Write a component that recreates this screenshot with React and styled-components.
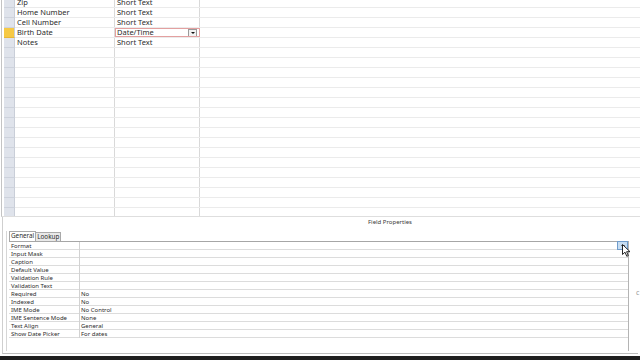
import React from 'react';
import styled, { createGlobalStyle } from 'styled-components';

const GlobalStyle = createGlobalStyle`
  html, body {
    margin: 0;
    padding: 0;
    background: #fff;
  }
  body {
    font-family: "Noto Sans", "Liberation Sans", sans-serif;
    color: #2b2b2b;
  }
`;

const Styled = {
  Screen: styled.div`
    position: relative;
    display: flex;
    flex-direction: column;
    width: 640px;
    height: 360px;
    overflow: hidden;
    background: #fff;
  `,
  TablePane: styled.div`
    height: 217px;
    box-sizing: border-box;
    margin-left: 1px;
    padding-left: 2px;
    border-left: 1px solid #c4c4c4;
    border-bottom: 1px solid #dedede;
    overflow: hidden;
  `,
  Rows: styled.div`
    display: flex;
    flex-direction: column;
    margin-top: -2px;
  `,
  Row: styled.div`
    display: grid;
    grid-template-columns: 11px 100px 85px 1fr;
    height: 10px;
    box-sizing: border-box;
    border-bottom: 1px solid #ebebeb;
  `,
  Selector: styled.div`
    background: ${({ active }) => (active ? '#f6c944' : '#dfe3eb')};
    border-right: 1px solid #c9ced8;
    margin-bottom: -1px;
    border-bottom: 1px solid ${({ active }) => (active ? '#e7b636' : '#cdd2dc')};
  `,
  Cell: styled.div`
    display: flex;
    align-items: center;
    padding-left: 2px;
    font-size: 7.5px;
    line-height: 9px;
    white-space: nowrap;
    border-right: 1px solid ${({ last }) => (last ? 'transparent' : '#d9d9d9')};
    box-sizing: border-box;
    outline: ${({ focused }) => (focused ? '1px solid #e3a0a0' : 'none')};
    outline-offset: -1px;
  `,
  ComboButton: styled.div`
    display: flex;
    align-items: center;
    justify-content: center;
    width: 7px;
    height: 6px;
    margin: 0 2px 0 auto;
    border: 1px solid #9a9a9a;
    background: #f2f2f2;
  `,
  Arrow: styled.div`
    width: 0;
    height: 0;
    border-left: 2px solid transparent;
    border-right: 2px solid transparent;
    border-top: 2px solid #111;
  `,
  PropsPane: styled.div`
    display: flex;
    flex-direction: column;
    height: 137px;
    box-sizing: border-box;
    margin: 0 2px 0 2px;
    padding: 0 0 2px 3px;
    border-left: 1px solid #cfcfcf;
    border-bottom: 1px solid #bdbdbd;
  `,
  PaneTitle: styled.div`
    height: 14px;
    padding-left: 136px;
    text-align: center;
    font-size: 6px;
    line-height: 11px;
    color: #3a3a3a;
  `,
  Frame: styled.div`
    display: flex;
    flex-direction: column;
    flex: 1;
    padding-left: 2px;
    border-left: 1px solid #d6d6d6;
  `,
  Tabs: styled.div`
    display: flex;
    align-items: flex-end;
    height: 10px;
  `,
  Tab: styled.div`
    height: ${({ selected }) => (selected ? '10px' : '9px')};
    box-sizing: border-box;
    padding: 0 1px;
    font-size: 6.3px;
    line-height: 8px;
    border: 1px solid #a9a9a9;
    border-bottom: none;
    background: ${({ selected }) => (selected ? '#fff' : '#e9e9e9')};
    margin-left: ${({ selected }) => (selected ? '0' : '-1px')};
  `,
  PropsBody: styled.div`
    width: 620px;
    height: 110px;
    box-sizing: border-box;
    border-top: 1px solid #a6a6a6;
    border-right: 1px solid #b4b4b4;
  `,
  PropRow: styled.div`
    display: grid;
    grid-template-columns: 71px 1fr;
    height: 8px;
    box-sizing: border-box;
    border-bottom: 1px solid #dcdcdc;
    font-size: 6px;
    line-height: 8px;
  `,
  PropLabel: styled.div`
    padding-left: 2px;
    border-right: 1px solid #d2d2d2;
    white-space: nowrap;
  `,
  PropValue: styled.div`
    display: flex;
    padding-left: 1px;
    white-space: nowrap;
  `,
  DropButton: styled.div`
    display: flex;
    align-items: center;
    justify-content: center;
    width: 9px;
    height: 7px;
    margin: -1px 0 0 auto;
    border: 1px solid #6f9ccc;
    background: #c7ddf2;
  `,
  Cursor: styled.svg`
    position: absolute;
    left: 622px;
    top: 244px;
  `,
  EdgeMark: styled.span`
    position: absolute;
    left: 636px;
    top: 288px;
    font-size: 7px;
    color: #9a9a9a;
  `,
  Taskbar: styled.div`
    margin-top: auto;
    height: 4px;
    background: #1e1e1e;
  `,
};

const fields = [
  { name: 'Zip', type: 'Short Text' },
  { name: 'Home Number', type: 'Short Text' },
  { name: 'Cell Number', type: 'Short Text' },
  { name: 'Birth Date', type: 'Date/Time', active: true },
  { name: 'Notes', type: 'Short Text' },
];

const properties = [
  ['Format', ''],
  ['Input Mask', ''],
  ['Caption', ''],
  ['Default Value', ''],
  ['Validation Rule', ''],
  ['Validation Text', ''],
  ['Required', 'No'],
  ['Indexed', 'No'],
  ['IME Mode', 'No Control'],
  ['IME Sentence Mode', 'None'],
  ['Text Align', 'General'],
  ['Show Date Picker', 'For dates'],
];

const rows = [...fields, ...Array.from({ length: 17 }, () => ({ name: '', type: '' }))];

function App() {
  return (
    <Styled.Screen>
      <GlobalStyle />
      <Styled.TablePane>
        <Styled.Rows>
          {rows.map((f, i) => (
            <Styled.Row key={i}>
              <Styled.Selector active={f.active} />
              <Styled.Cell>{f.name}</Styled.Cell>
              <Styled.Cell focused={f.active}>
                {f.type}
                {f.active && (
                  <Styled.ComboButton>
                    <Styled.Arrow />
                  </Styled.ComboButton>
                )}
              </Styled.Cell>
              <Styled.Cell last />
            </Styled.Row>
          ))}
        </Styled.Rows>
      </Styled.TablePane>

      <Styled.PropsPane>
        <Styled.PaneTitle>Field Properties</Styled.PaneTitle>
        <Styled.Frame>
          <Styled.Tabs>
            <Styled.Tab selected>General</Styled.Tab>
            <Styled.Tab>Lookup</Styled.Tab>
          </Styled.Tabs>
          <Styled.PropsBody>
            {properties.map(([label, value], i) => (
              <Styled.PropRow key={label}>
                <Styled.PropLabel>{label}</Styled.PropLabel>
                <Styled.PropValue>
                  {value}
                  {i === 0 && (
                    <Styled.DropButton>
                      <Styled.Arrow />
                    </Styled.DropButton>
                  )}
                </Styled.PropValue>
              </Styled.PropRow>
            ))}
          </Styled.PropsBody>
        </Styled.Frame>
      </Styled.PropsPane>
      <Styled.Taskbar />

      <Styled.Cursor width="9" height="13" viewBox="0 0 9 13">
        <path d="M0.5 0.5 L0.5 10.5 L3 8.2 L4.8 12.3 L6.3 11.6 L4.6 7.7 L8 7.7 Z" fill="#fff" stroke="#111" strokeWidth="0.9" strokeLinejoin="round" />
      </Styled.Cursor>
      <Styled.EdgeMark>c</Styled.EdgeMark>
    </Styled.Screen>
  );
}

export default App;
